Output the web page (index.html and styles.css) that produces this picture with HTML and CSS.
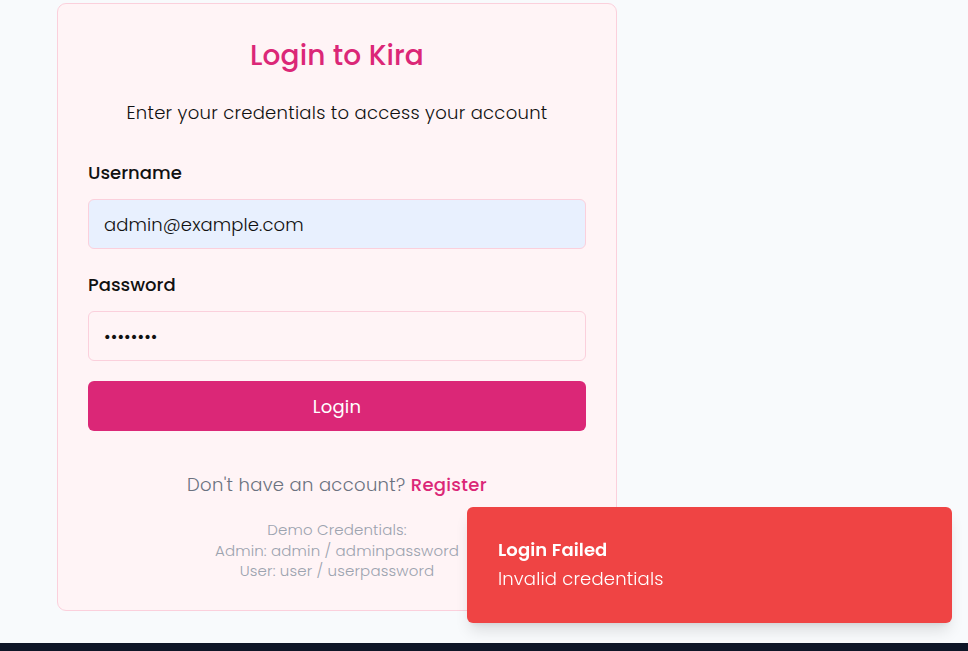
FILE: index.html
```html
<!DOCTYPE html>
<html lang="en">
<head>
<meta charset="utf-8">
<title>Login to Kira</title>
<link rel="stylesheet" href="styles.css">
</head>
<body>
<main class="page">
  <section class="card">
    <h1 class="title">Login to Kira</h1>
    <p class="subtitle">Enter your credentials to access your account</p>
    <form class="form">
      <div class="field">
        <label class="label" for="u">Username</label>
        <input class="input input-filled" id="u" type="text" value="admin@example.com">
      </div>
      <div class="field field-last">
        <label class="label" for="p">Password</label>
        <input class="input" id="p" type="password" value="password">
      </div>
      <button class="btn" type="button">Login</button>
    </form>
    <p class="register">Don't have an account? <a class="link" href="#">Register</a></p>
    <div class="demo">
      <div>Demo Credentials:</div>
      <div>Admin: admin / adminpassword</div>
      <div>User: user / userpassword</div>
    </div>
  </section>
</main>
<footer class="footer"></footer>
<div class="toast">
  <div class="toast-title">Login Failed</div>
  <div class="toast-msg">Invalid credentials</div>
</div>
</body>
</html>
```
FILE: styles.css
```css
* { box-sizing: border-box; }
html, body { margin: 0; padding: 0; }
body {
  background: #f8fafc;
  font-family: "Poppins", "Open Sans", sans-serif;
  color: #111;
  height: 651px;
  overflow: hidden;
}
.page {
  height: 643px;
  padding: 3px 0 0 57px;
}
.card {
  width: 560px;
  height: 608px;
  background: #fff4f6;
  border: 1px solid #fbd0dc;
  border-radius: 9px;
  padding: 30px 30px;
}
.title {
  margin: 0;
  text-align: center;
  color: #db2777;
  font-size: 28px;
  font-weight: 500;
  line-height: 44px;
  height: 44px;
  letter-spacing: 0.1px;
}
.subtitle {
  margin: 21px 0 0;
  text-align: center;
  font-size: 18px;
  font-weight: 300;
  line-height: 28px;
  color: #111;
  letter-spacing: 0.27px;
}
.form {
  margin-top: 32px;
  display: flex;
  flex-direction: column;
}
.field { display: flex; flex-direction: column; margin-bottom: 22px; }
.field-last { margin-bottom: 20px; }
.label {
  font-size: 18px;
  font-weight: 500;
  line-height: 28px;
  margin-bottom: 12px;
  color: #111;
}
.input {
  height: 50px;
  border: 1px solid #fbd0dc;
  border-radius: 6px;
  background: #fff4f6;
  padding: 0 15px;
  font-family: inherit;
  font-size: 18px;
  font-weight: 300;
  color: #111;
  outline: none;
  letter-spacing: 0.1px;
}
.input-filled { background: #e8f0fe; }
.btn {
  height: 50px;
  border: 0;
  border-radius: 6px;
  background: #db2777;
  color: #fff;
  font-family: inherit;
  font-size: 18px;
  font-weight: 400;
  letter-spacing: 0.2px;
}
.register {
  margin: 40px 0 0;
  text-align: center;
  color: #6b7280;
  font-size: 18px;
  font-weight: 300;
  line-height: 28px;
  letter-spacing: 0.3px;
}
.link { color: #db2777; text-decoration: none; font-weight: 500; }
.demo {
  margin-top: 21px;
  text-align: center;
  color: #9ca3af;
  font-size: 15px;
  font-weight: 300;
  line-height: 20.5px;
  letter-spacing: 0.15px;
}
.footer {
  height: 8px;
  background: #0e1627;
}
.toast {
  position: fixed;
  left: 467px;
  top: 507px;
  width: 485px;
  height: 116px;
  background: #ef4444;
  border-radius: 6px;
  box-shadow: 0 10px 15px -3px rgba(0,0,0,0.12), 0 4px 6px -4px rgba(0,0,0,0.1);
  padding: 31px 31px;
  color: #fff;
}
.toast-title { font-size: 18px; font-weight: 600; line-height: 24px; letter-spacing: 0.1px; }
.toast-msg { font-size: 18px; font-weight: 300; line-height: 24px; margin-top: 5px; letter-spacing: 0.17px; }
```
